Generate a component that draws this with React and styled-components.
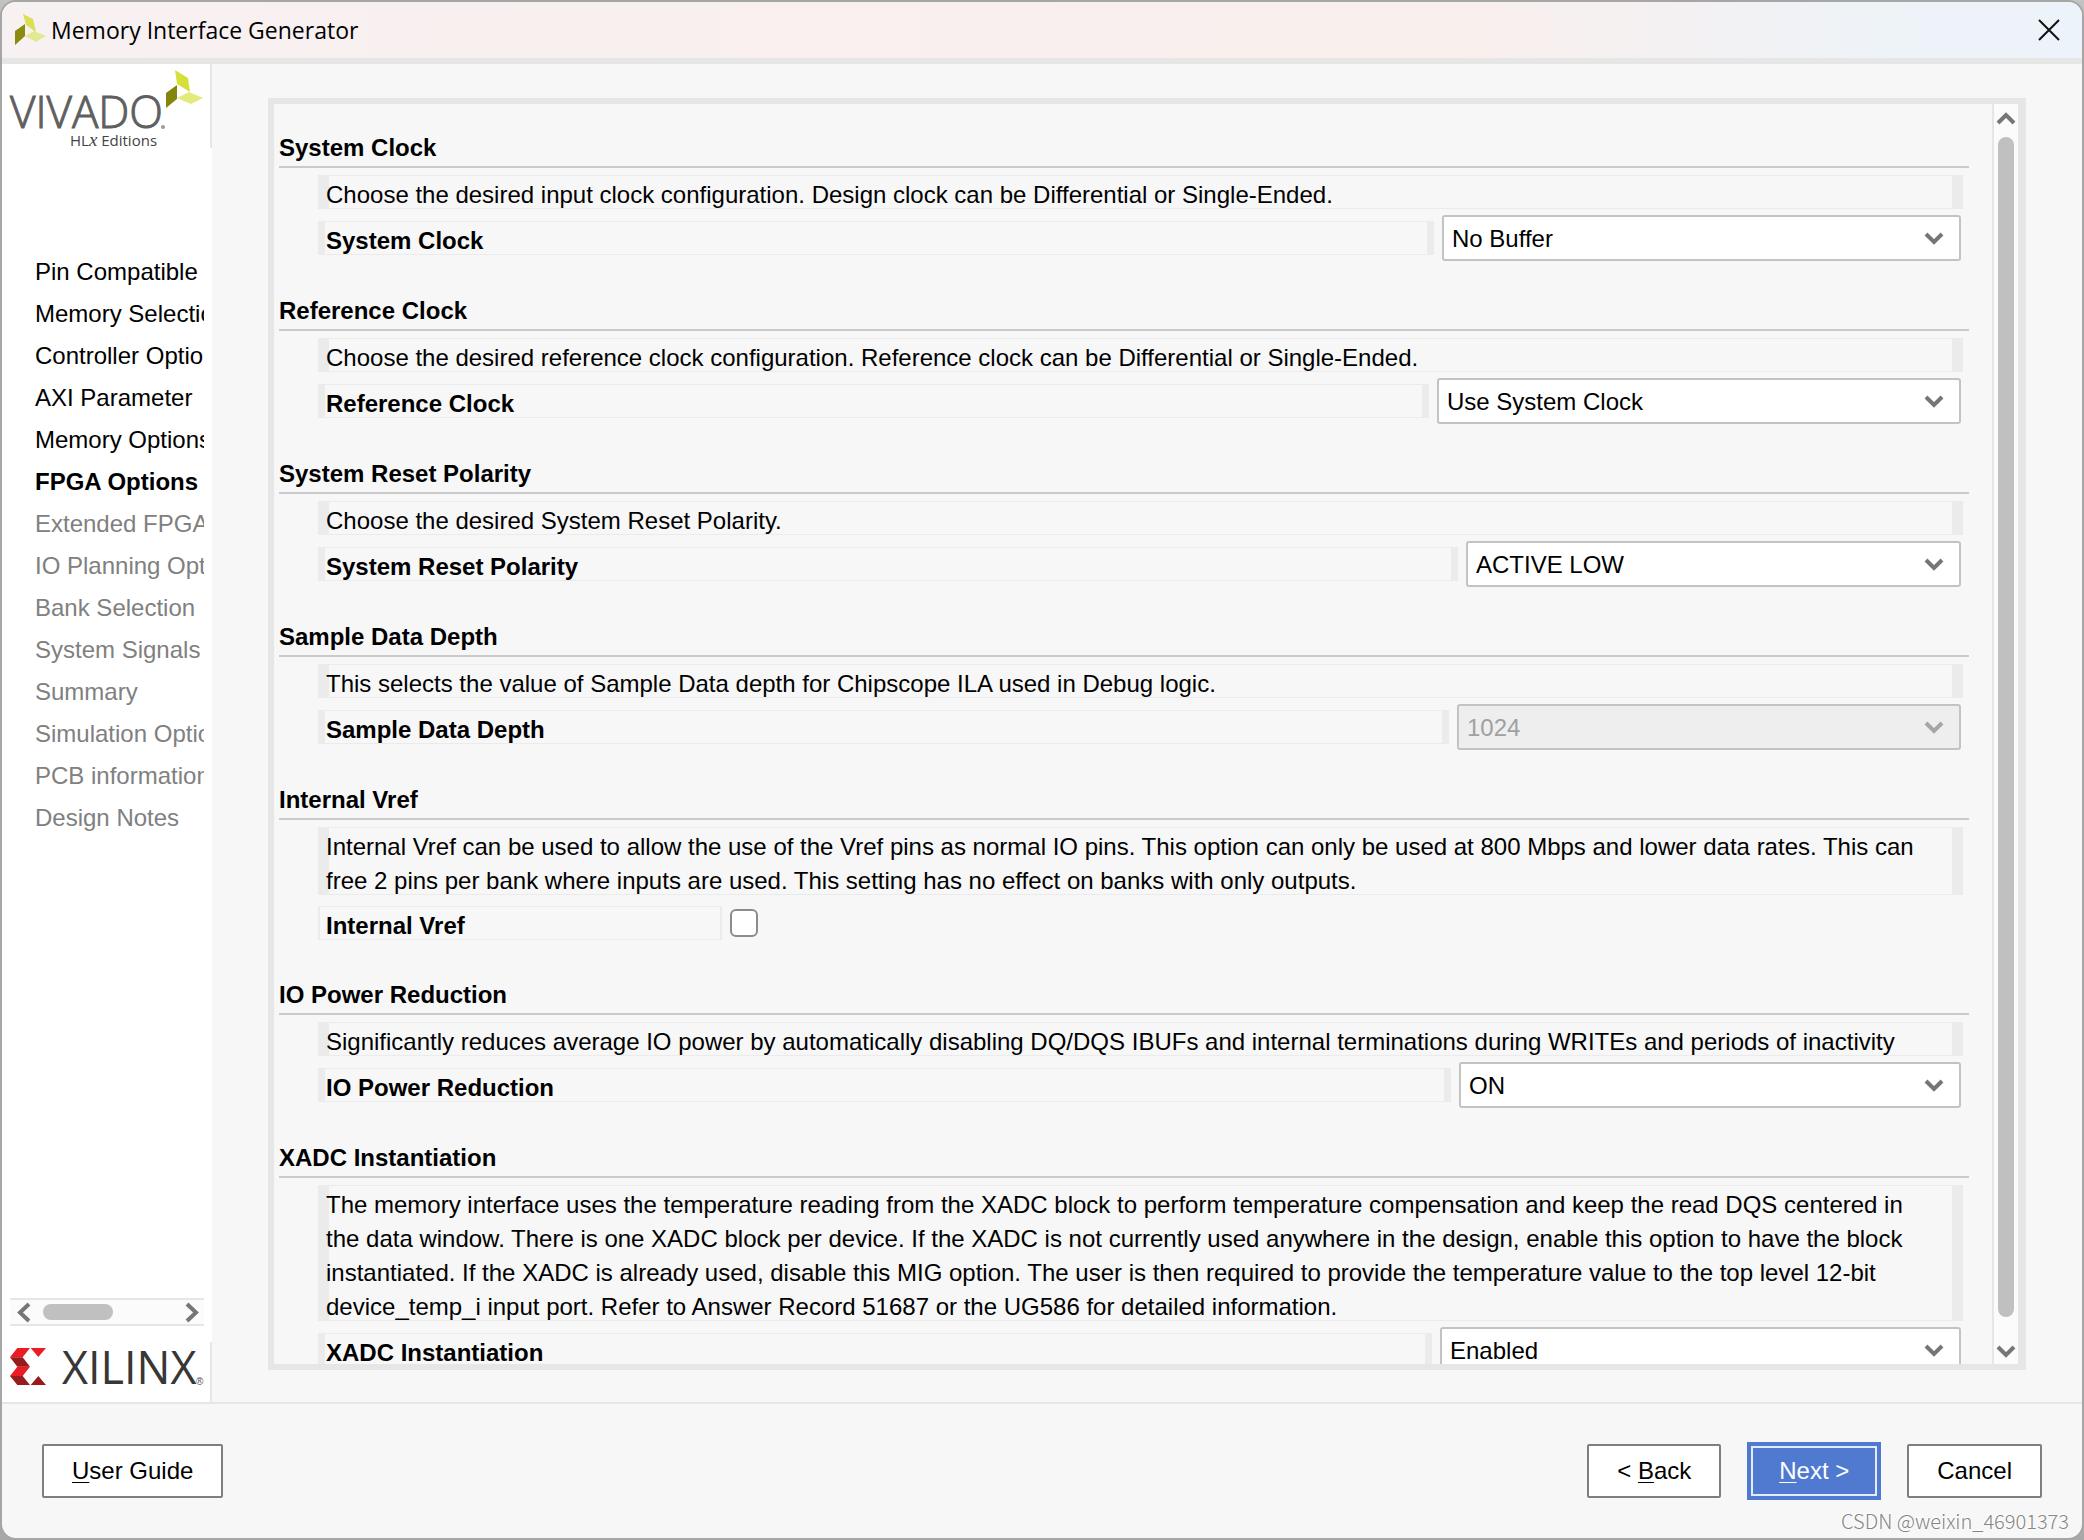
import React, { useState } from 'react';
import styled, { createGlobalStyle, css } from 'styled-components';

const GlobalStyle = createGlobalStyle`
  * {
    box-sizing: border-box;
  }

  body {
    margin: 0;
    background: linear-gradient(to bottom, #c4c4c4, #a8a8a8 60px, #a8a8a8);
    font-family: 'Liberation Sans', Arial, sans-serif;
    font-size: 24px;
    color: #000;
  }
`;

const LINE = '#e6e6e6';
const FRAME = '#ebebeb';

const Window = styled.div`
  display: flex;
  flex-direction: column;
  height: 100vh;
  border: 2px solid #a6a6a6;
  border-radius: 16px;
  background: #f7f7f7;
  overflow: hidden;
`;

const TitleBar = styled.header`
  display: flex;
  align-items: center;
  gap: 4px;
  height: 62px;
  flex: none;
  padding: 0 16px 0 12px;
  border-bottom: 6px solid ${LINE};
  background: linear-gradient(to right, #f8f1f1, #f9efed 70%, #f4f1f2 80%, #edf3f8 92%, #edf3fa);
`;

const WindowTitle = styled.h1`
  flex: 1;
  margin: 0;
  font-family: 'Open Sans', 'Noto Sans', sans-serif;
  font-size: 23px;
  font-weight: 400;
`;

const CloseButton = styled.button`
  display: flex;
  padding: 6px;
  border: 0;
  background: none;
`;

const Body = styled.div`
  display: flex;
  flex: 1;
  min-height: 0;
`;

const Sidebar = styled.aside`
  display: flex;
  flex-direction: column;
  width: 210px;
  flex: none;
  background: #fff;
`;

const Brand = styled.div`
  height: ${props => props.$height}px;
  flex: none;
  border-right: 2px solid ${LINE};

  svg {
    display: block;
  }
`;

const StepList = styled.ol`
  flex: 1;
  min-height: 0;
  margin: 0 8px 0 0;
  padding: 103px 0 0 33px;
  list-style: none;
  overflow: hidden;
`;

const Step = styled.li`
  line-height: 42px;
  white-space: nowrap;
  font-weight: ${props => (props.$state === 'current' ? 700 : 400)};
  color: ${props => (props.$state === 'pending' ? '#808080' : '#000')};
`;

const SideScroll = styled.div`
  display: flex;
  align-items: center;
  gap: 12px;
  height: 28px;
  flex: none;
  margin: 0 8px 16px;
  padding: 0 5px 0 7px;
  border: solid ${LINE};
  border-width: 2px 0;
  background: #fbfbfb;
`;

const ScrollButton = styled.button`
  display: flex;
  flex: none;
  padding: 0;
  border: 0;
  background: none;
`;

const SideTrack = styled.div`
  flex: 1;
`;

const SideThumb = styled.div`
  width: 70px;
  height: 16px;
  border-radius: 8px;
  background: #c0c0c0;
`;

const Main = styled.main`
  display: flex;
  flex: 1;
  min-width: 0;
  padding: 34px 56px 32px;
`;

const Panel = styled.div`
  display: flex;
  flex: 1;
  min-width: 0;
  border: 6px solid ${LINE};
  border-right-width: 8px;
`;

const PanelContent = styled.div`
  flex: 1;
  min-width: 0;
  padding: 27px 23px 0 5px;
  overflow: hidden;
`;

const PanelScroll = styled.div`
  display: flex;
  flex-direction: column;
  align-items: center;
  gap: 12px;
  width: 26px;
  flex: none;
  padding: 8px 0 6px;
  border-left: 2px solid ${LINE};
  background: #fbfbfb;
`;

const PanelTrack = styled.div`
  display: flex;
  flex: 1;
  padding-bottom: 16px;
`;

const PanelThumb = styled.div`
  width: 16px;
  border-radius: 8px;
  background: #c0c0c0;
`;

const Section = styled.section`
  margin-bottom: 33px;
`;

const SectionTitle = styled.h2`
  margin: 0 0 7px;
  padding-bottom: 1px;
  border-bottom: 2px solid #cacaca;
  font-size: 24px;
  line-height: 34px;
`;

const SectionBody = styled.div`
  margin: 0 6px 0 39px;
`;

// Thin rules above and below, thicker bars at both ends.
// The text sits low in the frame, so the box hangs 3px over its own slot.
const framed = css`
  margin-bottom: -3px;
  padding-top: 3px;
  line-height: 34px;
  background:
    linear-gradient(${FRAME}, ${FRAME}) 0 0 / 100% 1px,
    linear-gradient(${FRAME}, ${FRAME}) 0 calc(100% - 3px) / 100% 1px,
    linear-gradient(${FRAME}, ${FRAME}) 0 0 / ${props => props.$bar}px calc(100% - 3px),
    linear-gradient(${FRAME}, ${FRAME}) 100% 0 / ${props => props.$bar}px calc(100% - 3px);
  background-repeat: no-repeat;
`;

const Description = styled.p`
  margin: 0;
  padding: 0 26px 0 8px;
  ${framed}
`;

const FieldRow = styled.div`
  display: flex;
  align-items: center;
  gap: 8px;
  height: ${props => (props.$compact ? 44 : 46)}px;
  margin-top: 6px;
  padding-right: 2px;
`;

const FieldLabel = styled.label`
  flex: ${props => (props.$width ? 'none' : 1)};
  width: ${props => (props.$width ? `${props.$width}px` : 'auto')};
  padding-left: 8px;
  font-weight: 700;
  ${framed}
`;

const SelectWrap = styled.div`
  position: relative;
  width: ${props => props.$width}px;
  flex: none;
`;

const Select = styled.select`
  display: block;
  width: 100%;
  height: 46px;
  padding: 0 40px 0 8px;
  border: 2px solid #c3c3c3;
  border-radius: 3px;
  appearance: none;
  background: #fff;
  font: inherit;
  color: #000;

  &:disabled {
    background: #eee;
    color: #a0a0a0;
    opacity: 1;
  }
`;

const SelectArrow = styled.span`
  position: absolute;
  top: 17px;
  right: 17px;
  display: flex;
  pointer-events: none;
`;

const Checkbox = styled.input`
  width: 28px;
  height: 28px;
  margin: 0;
  border: 2px solid #8c8c8c;
  border-radius: 6px;
  appearance: none;
  background: #fff;

  &:checked {
    background: #4f7ad0;
  }
`;

const Footer = styled.footer`
  position: relative;
  display: flex;
  align-items: center;
  gap: 26px;
  height: 136px;
  flex: none;
  padding: 0 40px;
  border-top: 2px solid ${LINE};
`;

const Spacer = styled.div`
  flex: 1;
`;

const Button = styled.button`
  min-width: 134px;
  height: 54px;
  padding: 0 28px;
  border: 2px solid #7f7f7f;
  border-radius: 2px;
  background: #fff;
  font: inherit;
  color: #000;

  u {
    text-decoration-thickness: 1px;
    text-underline-offset: 3px;
    text-decoration-skip-ink: none;
  }
`;

const PrimaryButton = styled(Button)`
  height: 58px;
  border: 0;
  border-radius: 0;
  background: #4f7ad0;
  color: #fff;
  outline: 2px solid #e4ebf8;
  outline-offset: -6px;
`;

const Watermark = styled.span`
  position: absolute;
  right: 13px;
  bottom: 5px;
  font-family: 'Noto Sans CJK SC', sans-serif;
  font-size: 20px;
  font-weight: 300;
  line-height: 24px;
  color: #858585;
  text-shadow: -1px -1px 0 #fff;
`;

const steps = [
  { label: 'Pin Compatible', state: 'done' },
  { label: 'Memory Selection', state: 'done' },
  { label: 'Controller Options', state: 'done' },
  { label: 'AXI Parameter', state: 'done' },
  { label: 'Memory Options', state: 'done' },
  { label: 'FPGA Options', state: 'current' },
  { label: 'Extended FPGA', state: 'pending' },
  { label: 'IO Planning Options', state: 'pending' },
  { label: 'Bank Selection', state: 'pending' },
  { label: 'System Signals', state: 'pending' },
  { label: 'Summary', state: 'pending' },
  { label: 'Simulation Options', state: 'pending' },
  { label: 'PCB information', state: 'pending' },
  { label: 'Design Notes', state: 'pending' },
];

const sections = [
  {
    id: 'system-clock',
    title: 'System Clock',
    text: 'Choose the desired input clock configuration. Design clock can be Differential or Single-Ended.',
    options: ['No Buffer', 'Differential', 'Single-Ended'],
    width: 519,
  },
  {
    id: 'reference-clock',
    title: 'Reference Clock',
    text: 'Choose the desired reference clock configuration. Reference clock can be Differential or Single-Ended.',
    options: ['Use System Clock', 'No Buffer', 'Differential', 'Single-Ended'],
    width: 524,
  },
  {
    id: 'reset-polarity',
    title: 'System Reset Polarity',
    text: 'Choose the desired System Reset Polarity.',
    options: ['ACTIVE LOW', 'ACTIVE HIGH'],
    width: 495,
  },
  {
    id: 'sample-depth',
    title: 'Sample Data Depth',
    text: 'This selects the value of Sample Data depth for Chipscope ILA used in Debug logic.',
    options: ['1024'],
    width: 504,
    disabled: true,
  },
  {
    id: 'internal-vref',
    title: 'Internal Vref',
    text: 'Internal Vref can be used to allow the use of the Vref pins as normal IO pins. This option can only be used at 800 Mbps and lower data rates. This can free 2 pins per bank where inputs are used. This setting has no effect on banks with only outputs.',
  },
  {
    id: 'io-power',
    title: 'IO Power Reduction',
    text: 'Significantly reduces average IO power by automatically disabling DQ/DQS IBUFs and internal terminations during WRITEs and periods of inactivity',
    options: ['ON', 'OFF'],
    width: 502,
  },
  {
    id: 'xadc',
    title: 'XADC Instantiation',
    text: 'The memory interface uses the temperature reading from the XADC block to perform temperature compensation and keep the read DQS centered in the data window. There is one XADC block per device. If the XADC is not currently used anywhere in the design, enable this option to have the block instantiated. If the XADC is already used, disable this MIG option. The user is then required to provide the temperature value to the top level 12-bit device_temp_i input port. Refer to Answer Record 51687 or the UG586 for detailed information.',
    options: ['Enabled', 'Disabled'],
    width: 521,
  },
];

const chevrons = {
  up: { w: 20, h: 13, d: 'M2 11 L10 3 L18 11' },
  down: { w: 20, h: 13, d: 'M2 2 L10 10 L18 2' },
  left: { w: 14, h: 21, d: 'M12 2 L3 10.5 L12 19' },
  right: { w: 14, h: 21, d: 'M2 2 L11 10.5 L2 19' },
};

const Chevron = ({ dir, color = '#767676' }) => {
  const { w, h, d } = chevrons[dir];
  return (
    <svg width={w} height={h} viewBox={`0 0 ${w} ${h}`} aria-hidden="true">
      <path d={d} fill="none" stroke={color} strokeWidth="4" />
    </svg>
  );
};

const AppIcon = () => (
  <svg width="33" height="32" viewBox="0 0 33 32" aria-hidden="true">
    <path d="M9 0 L19 5 L22 18 L12 11 Z" fill="#dbdf56" />
    <path d="M1 17 L11 10 L11 22 L1 31 Z" fill="#8b8b0d" />
    <path d="M11 22 L20 17 L32 22 L22 28 Z" fill="#e4e894" />
  </svg>
);

const VivadoLogo = () => (
  <svg width="208" height="84" viewBox="0 0 208 84" role="img" aria-label="Vivado HLx Editions">
    <path d="M173 6 L186 14 L188 28 L175 20 Z" fill="#d5e03b" />
    <path d="M164 29 L175 21 L175 35 L164 44 Z" fill="#84850a" />
    <path d="M175 34 L187 28 L201 34 L189 40 Z" fill="#e3ea7c" />
    <text
      x="8"
      y="64"
      fontFamily="'Open Sans', sans-serif"
      fontWeight="300"
      fontSize="44"
      fill="#5f5f5f"
      stroke="#5f5f5f"
      strokeWidth="1"
    >
      VIVADO
    </text>
    <circle cx="161" cy="63" r="2" fill="#9a9a9a" />
    <text x="68" y="82" fontFamily="'Open Sans', sans-serif" fontSize="15" fill="#444">
      HL
      <tspan fontFamily="'Liberation Serif', serif" fontStyle="italic" fontSize="19">x</tspan>
      {' Editions'}
    </text>
  </svg>
);

const XilinxLogo = () => (
  <svg width="208" height="60" viewBox="0 0 208 60" role="img" aria-label="Xilinx">
    <svg x="8" y="6" width="36" height="37" viewBox="30 264 108 111">
      <path d="M30 292 L52 264 H90 L68 292 Z M92 264 H138 L115 291 Z M52 320 H90 L68 348 H30 Z" fill="#ec1c24" />
      <path d="M30 292 H68 L90 320 H52 Z M30 348 H68 L90 375 H52 Z M92 375 L115 348 L138 375 Z" fill="#981b1e" />
    </svg>
    <text x="60" y="42" fontFamily="'Open Sans', sans-serif" fontSize="45" fill="#373735">XILINX</text>
    <text x="194" y="43" fontSize="10" fill="#555">®</text>
  </svg>
);

const OptionSection = ({ section }) => {
  const { id, title, text, options, width, disabled } = section;
  const [value, setValue] = useState(options ? options[0] : '');
  const [checked, setChecked] = useState(false);

  return (
    <Section>
      <SectionTitle>{title}</SectionTitle>
      <SectionBody>
        <Description $bar={11}>{text}</Description>
        {options ? (
          <FieldRow>
            <FieldLabel htmlFor={id} $bar={7}>{title}</FieldLabel>
            <SelectWrap $width={width}>
              <Select id={id} value={value} disabled={disabled} onChange={e => setValue(e.target.value)}>
                {options.map(option => (
                  <option key={option}>{option}</option>
                ))}
              </Select>
              <SelectArrow>
                <Chevron dir="down" color={disabled ? '#a6a6a6' : '#767676'} />
              </SelectArrow>
            </SelectWrap>
          </FieldRow>
        ) : (
          <FieldRow $compact>
            <FieldLabel htmlFor={id} $bar={2} $width={404}>{title}</FieldLabel>
            <Checkbox id={id} type="checkbox" checked={checked} onChange={e => setChecked(e.target.checked)} />
          </FieldRow>
        )}
      </SectionBody>
    </Section>
  );
};

const App = () => (
  <>
    <GlobalStyle />
    <Window>
      <TitleBar>
        <AppIcon />
        <WindowTitle>Memory Interface Generator</WindowTitle>
        <CloseButton aria-label="Close">
          <svg width="22" height="22" viewBox="0 0 22 22">
            <path d="M1 1 L21 21 M21 1 L1 21" stroke="#111" strokeWidth="2" />
          </svg>
        </CloseButton>
      </TitleBar>

      <Body>
        <Sidebar>
          <Brand $height={84}>
            <VivadoLogo />
          </Brand>
          <StepList>
            {steps.map(step => (
              <Step key={step.label} $state={step.state}>{step.label}</Step>
            ))}
          </StepList>
          <SideScroll>
            <ScrollButton aria-label="Scroll left">
              <Chevron dir="left" />
            </ScrollButton>
            <SideTrack>
              <SideThumb />
            </SideTrack>
            <ScrollButton aria-label="Scroll right">
              <Chevron dir="right" />
            </ScrollButton>
          </SideScroll>
          <Brand $height={60}>
            <XilinxLogo />
          </Brand>
        </Sidebar>

        <Main>
          <Panel>
            <PanelContent>
              {sections.map(section => (
                <OptionSection key={section.id} section={section} />
              ))}
            </PanelContent>
            <PanelScroll>
              <ScrollButton aria-label="Scroll up">
                <Chevron dir="up" />
              </ScrollButton>
              <PanelTrack>
                <PanelThumb />
              </PanelTrack>
              <ScrollButton aria-label="Scroll down">
                <Chevron dir="down" />
              </ScrollButton>
            </PanelScroll>
          </Panel>
        </Main>
      </Body>

      <Footer>
        <Button><u>U</u>ser Guide</Button>
        <Spacer />
        <Button>&lt; <u>B</u>ack</Button>
        <PrimaryButton><u>N</u>ext &gt;</PrimaryButton>
        <Button>Cancel</Button>
        <Watermark>CSDN @weixin_46901373</Watermark>
      </Footer>
    </Window>
  </>
);

export default App;
